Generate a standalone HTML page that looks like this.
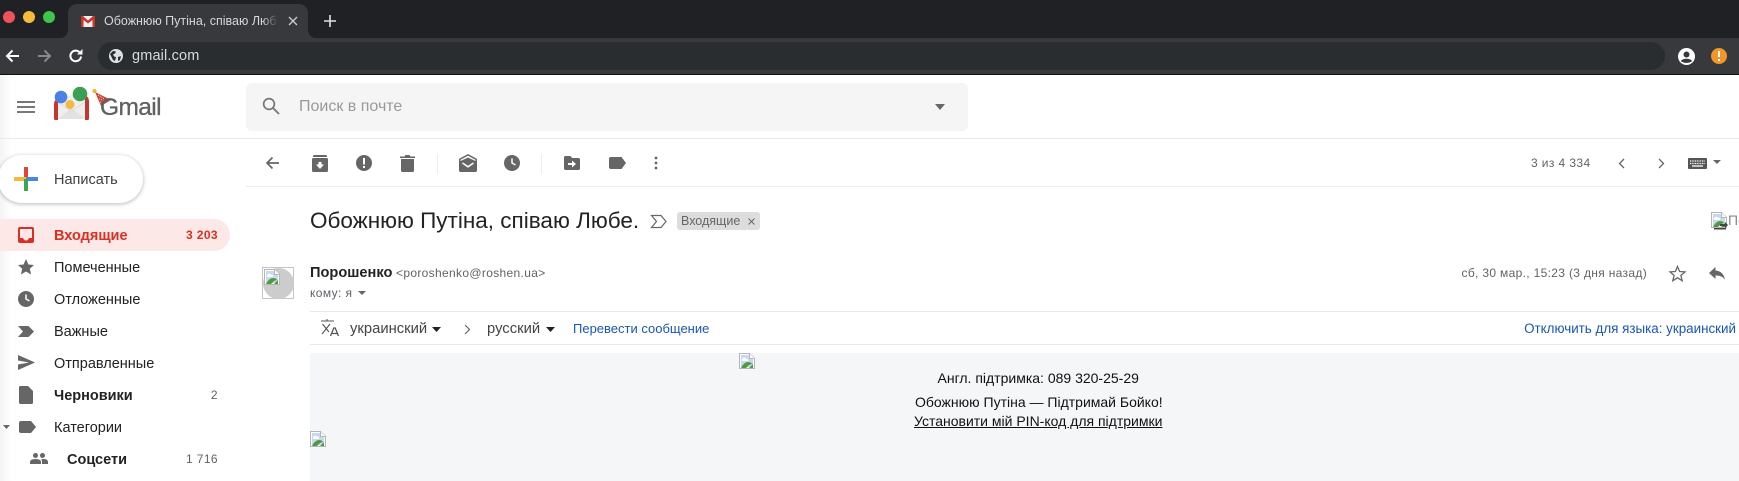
<!DOCTYPE html>
<html lang="ru"><head><meta charset="utf-8"><title>Gmail</title>
<style>
html,body{margin:0;padding:0;width:1739px;height:481px;overflow:hidden;background:#fff}
body{position:relative;font-family:"Liberation Sans","Noto Sans CJK SC",sans-serif;color:#222}
.a{position:absolute;white-space:nowrap}
svg{position:absolute;overflow:visible}
.r{position:absolute;left:54px;font-size:14.5px;line-height:20px;color:#222}
.c{position:absolute;right:1521px;font-size:12px;line-height:16px;color:#5f6368;letter-spacing:.4px}
.l{position:absolute;background:#e9e9e9;height:1px}
</style></head><body>
<!-- sidebar edge shade -->
<div class="a" style="left:0;top:75px;width:12px;height:406px;background:linear-gradient(90deg,#f4f4f4,#fff)"></div>
<!-- browser chrome -->
<div class="a" style="left:0;top:0;width:1739px;height:38px;background:#1f2124"></div>
<div class="a" style="left:0;top:38px;width:1739px;height:36px;background:#37393c"></div>
<div class="a" style="left:0;top:74px;width:1739px;height:1px;background:#111"></div>
<div class="a" style="left:98px;top:42px;width:1567px;height:28px;border-radius:14px;background:#2a2d30"></div>
<svg style="left:60px;top:28px" width="256" height="10"><path d="M0 10Q8 10 8 0V10zM256 10Q248 10 248 0V10z" fill="#37393c"/></svg>
<div class="a" style="left:68px;top:4px;width:240px;height:34px;border-radius:9px 9px 0 0;background:#37393c"></div>
<div class="a" style="left:3px;top:11px;width:12px;height:12px;border-radius:50%;background:#f0525a"></div>
<div class="a" style="left:23px;top:11px;width:12px;height:12px;border-radius:50%;background:#f6bb3a"></div>
<div class="a" style="left:43px;top:11px;width:12px;height:12px;border-radius:50%;background:#3ec54b"></div>
<svg style="left:81px;top:16px" width="14" height="11" viewBox="0 0 14 11"><rect width="14" height="11" rx="1" fill="#eee"/><path d="M0 0h2l5 4.500L12 0h2v11h-2.500V4L7 7.500 2.500 4v7H0z" fill="#c5372c"/></svg>
<div class="a" style="left:104px;top:12px;width:172px;overflow:hidden;font-size:12.500px;line-height:18px;color:#d5d7da">Обожнюю Путіна, співаю Любе.</div>
<div class="a" style="left:262px;top:6px;width:16px;height:28px;background:linear-gradient(90deg,rgba(55,57,60,0),#37393c)"></div>
<svg style="left:288px;top:16px" width="10" height="10"><path d="M1 1l8 8M9 1l-8 8" stroke="#c8cacc" stroke-width="1.400"/></svg>
<svg style="left:324px;top:15px" width="12" height="12"><path d="M6 0v12M0 6h12" stroke="#dfe1e3" stroke-width="1.600"/></svg>
<svg style="left:5px;top:49px" width="15" height="14"><path d="M14 7H2M7.500 1.500 2 7l5.500 5.500" fill="none" stroke="#fff" stroke-width="2"/></svg>
<svg style="left:37px;top:49px" width="15" height="14"><path d="M1 7h12M7.500 1.500 13 7l-5.500 5.500" fill="none" stroke="#85878a" stroke-width="2"/></svg>
<svg style="left:68px;top:48px" width="16" height="16"><path d="M13 8.500A5.300 5.300 0 1 1 11.500 4.200" fill="none" stroke="#fff" stroke-width="2"/><path d="M9 6.500h5.500V1z" fill="#fff"/></svg>
<svg style="left:109px;top:49px" width="14" height="14" viewBox="0 0 14 14"><circle cx="7" cy="7" r="7" fill="#dfe1e3"/><path d="M1 5l3-3 3 .5-1 2-2 1 1 2 2 .5-1 4-2-1zM9 8l3-1-1 4-2 1z" fill="#2a2d30"/></svg>
<div class="a" style="left:132px;top:47px;font-size:14.500px;line-height:18px;color:#d8dadd;letter-spacing:.15px">gmail.com</div>
<svg style="left:1678px;top:48px" width="17" height="17" viewBox="0 0 17 17"><circle cx="8.500" cy="8.500" r="8.500" fill="#fff"/><circle cx="8.500" cy="6.500" r="3" fill="#37393c"/><path d="M3 13c1-3 10-3 11 0-2 2.500-9 2.500-11 0z" fill="#37393c"/></svg>
<div class="a" style="left:1711px;top:48px;width:16px;height:16px;border-radius:50%;background:#f0962a"></div>
<div class="a" style="left:1718px;top:51px;width:2px;height:6px;background:#fff"></div>
<div class="a" style="left:1718px;top:59px;width:2px;height:2px;background:#fff"></div>

<!-- gmail header -->
<svg style="left:17px;top:101px" width="18" height="12"><path d="M0 1h18M0 6h18M0 11h18" stroke="#666" stroke-width="1.700"/></svg>
<svg style="left:54px;top:87px" width="60" height="36" viewBox="0 0 60 36">
<path d="M2 15Q18 2 33 13V32H2z" fill="#eee"/>
<path d="M4 32 17.500 21 31 32z" fill="#e2e2e2"/>
<path d="M4 15 17.500 24 31 15" fill="none" stroke="#dcdcdc" stroke-width="1"/>
<path d="M1 33Q0 33 0 31V17Q0 13 5 10L8 9 4 15V33zM34 33Q35 33 35 31V14Q35 10 30 7L26 6 31 13V33z" fill="#c5372c"/>
<circle cx="7" cy="10" r="6.300" fill="#4a80e8"/><circle cx="26" cy="7" r="7.300" fill="#3ba054"/><circle cx="16" cy="17.500" r="4.500" fill="#f5b93f"/>
<path d="M41 5l16 8-10 6z" fill="#c8413a"/><path d="M44 8l8 5M45 12l6 2M46 15l3 1" stroke="#f6d6d2" stroke-width="1" stroke-dasharray="1 1"/><circle cx="40.500" cy="4" r="2" fill="#f2b23a"/></svg>
<div class="a" style="left:100px;top:94px;font-size:24.500px;line-height:28px;color:#606060;letter-spacing:-.6px;-webkit-text-stroke:.3px #606060">Gmail</div>
<div class="a" style="left:246px;top:83px;width:722px;height:48px;border-radius:6px;background:#f5f5f5"></div>
<svg style="left:262px;top:97px" width="18" height="18"><circle cx="7" cy="7" r="5.400" fill="none" stroke="#777" stroke-width="1.700"/><path d="M11 11l6 6" stroke="#777" stroke-width="1.900"/></svg>
<div class="a" style="left:299px;top:97px;font-size:16px;line-height:20px;color:#999">Поиск в почте</div>
<svg style="left:935px;top:104px" width="10" height="6"><path d="M0 0h10L5 6z" fill="#666"/></svg>
<div class="l" style="left:0;top:138px;width:1739px;background:#ebebeb"></div>

<!-- sidebar -->
<div class="a" style="left:-2px;top:155px;width:145px;height:48px;border-radius:24px;background:#fff;box-shadow:0 1px 3px 1px rgba(60,64,67,.25)"></div>
<svg style="left:14px;top:167px" width="24" height="24"><rect x="10" width="4" height="12" fill="#e0443a"/><rect y="10" width="12" height="4" fill="#f4bb3a"/><rect x="12" y="10" width="12" height="4" fill="#4a85ea"/><rect x="10" y="12" width="4" height="12" fill="#3aa757"/></svg>
<div class="a" style="left:54px;top:170px;font-size:14.500px;line-height:20px;color:#3c4043">Написать</div>
<div class="a" style="left:0;top:219px;width:230px;height:32px;border-radius:0 16px 16px 0;background:#fce8e6"></div>

<svg style="left:18px;top:227px" width="16" height="16" viewBox="0 0 16 16"><path d="M2 0h12q2 0 2 2v12q0 2-2 2H2q-2 0-2-2V2q0-2 2-2zm0 2v9h3q1 2.500 3 2.500T11 11h3V2z" fill="#d93025"/></svg>
<div class="r" style="top:226px;color:#d93025;font-weight:bold">Входящие</div>
<div class="c" style="top:227px;color:#d93025;font-weight:bold">3 203</div>

<svg style="left:18px;top:259px" width="16" height="16" viewBox="0 0 16 16"><path d="M8 0l2.400 5.500 5.600.5-4.200 3.800 1.300 5.700L8 12.500l-5.100 3 1.300-5.700L0 6l5.600-.5z" fill="#666"/></svg>
<div class="r" style="top:258px">Помеченные</div>

<svg style="left:18px;top:291px" width="16" height="16"><circle cx="8" cy="8" r="8" fill="#666"/><path d="M8 3.500V8l3.500 2" fill="none" stroke="#fff" stroke-width="1.500"/></svg>
<div class="r" style="top:290px">Отложенные</div>

<svg style="left:18px;top:326px" width="16" height="11"><path d="M0 0h10.500L16 5.500 10.500 11H0l5-5.500z" fill="#666"/></svg>
<div class="r" style="top:322px">Важные</div>

<svg style="left:18px;top:355px" width="17" height="15"><path d="M0 0l17 7.500L0 15V9.500l11-2-11-2z" fill="#666"/></svg>
<div class="r" style="top:354px">Отправленные</div>

<svg style="left:19px;top:386px" width="14" height="18"><path d="M1.500 0H9l5 5v11.500q0 1.500-1.500 1.500h-11Q0 18 0 16.500v-15Q0 0 1.500 0z" fill="#666"/></svg>
<div class="r" style="top:386px;font-weight:bold">Черновики</div>
<div class="c" style="top:387px">2</div>

<svg style="left:3px;top:425px" width="7" height="4"><path d="M0 0h7L3.500 4z" fill="#666"/></svg>
<svg style="left:19px;top:421px" width="17" height="12"><path d="M2 0h10l5 6-5 6H2q-2 0-2-2V2q0-2 2-2z" fill="#666"/></svg>
<div class="r" style="top:418px">Категории</div>

<svg style="left:30px;top:453px" width="18" height="11" viewBox="0 0 18 11"><circle cx="5.500" cy="2.500" r="2.500" fill="#666"/><circle cx="12.500" cy="2.500" r="2.500" fill="#666"/><path d="M0 11V9q0-3 5.500-3T11 9v2zM12 11V8.500q0-1.200-1-2.300 7-.8 7 2.800v2z" fill="#666"/></svg>
<div class="r" style="left:67px;top:450px;font-weight:bold">Соцсети</div>
<div class="c" style="top:451px">1 716</div>

<!-- toolbar -->
<svg style="left:265px;top:156px" width="14" height="14"><path d="M14 7H2M7.500 1.500 2 7l5.500 5.500" fill="none" stroke="#666" stroke-width="1.700"/></svg>
<svg style="left:312px;top:155px" width="16" height="17" viewBox="0 0 16 17"><path d="M2.500 0h11Q15 0 15 1.500V2H1v-.5Q1 0 2.500 0z" fill="#666"/><path d="M1.500 3h13Q16 3 16 4.500V15.500Q16 17 14.500 17h-13Q0 17 0 15.500V4.500Q0 3 1.500 3z" fill="#666"/><path d="M8 14 4 9.500h2.500V7h3v2.500H12z" fill="#fff"/></svg>
<svg style="left:356px;top:155px" width="16" height="16"><circle cx="8" cy="8" r="8" fill="#666"/><rect x="7" y="3" width="2" height="6.500" fill="#fff"/><rect x="7" y="11" width="2" height="2" fill="#fff"/></svg>
<svg style="left:400px;top:155px" width="15" height="17"><path d="M0 1.500h4.500l1-1.500h4l1 1.500H15V3H0zM1 4h13v11.500q0 1.500-1.500 1.500h-10Q1 17 1 15.500z" fill="#666"/></svg>
<div class="a" style="left:437px;top:154px;width:1px;height:20px;background:#eee"></div>
<svg style="left:459px;top:154px" width="18" height="18" viewBox="0 0 18 18"><path d="M.8 7V5.300L9 .9l8.200 4.400V7" fill="none" stroke="#666" stroke-width="1.500"/><path d="M0 7h1.500L9 3.500 16.500 7H18v9.500q0 1.500-1.500 1.500h-15Q0 18 0 16.500z" fill="#666"/><path d="M3.500 9 9 12.800 14.500 9" fill="none" stroke="#fff" stroke-width="1.500"/></svg>
<svg style="left:503.500px;top:155px" width="16" height="16"><circle cx="8" cy="8" r="8" fill="#666"/><path d="M8 3.500V8l3.500 2" fill="none" stroke="#fff" stroke-width="1.500"/></svg>
<div class="a" style="left:541px;top:154px;width:1px;height:20px;background:#eee"></div>
<svg style="left:564px;top:156px" width="16" height="14"><path d="M1.500 0h5l1.500 2h6.500Q16 2 16 3.500v9q0 1.500-1.500 1.500h-13Q0 14 0 12.500v-11Q0 0 1.500 0z" fill="#666"/><path d="M4 7h4V4.500L12 8l-4 3.500V9H4z" fill="#fff"/></svg>
<svg style="left:608.500px;top:157px" width="17" height="12"><path d="M2 0h10.500L17 6l-4.500 6H2q-2 0-2-2V2q0-2 2-2z" fill="#666"/></svg>
<svg style="left:654px;top:156px" width="4" height="14"><circle cx="2" cy="2" r="1.400" fill="#666"/><circle cx="2" cy="7" r="1.400" fill="#666"/><circle cx="2" cy="12" r="1.400" fill="#666"/></svg>
<div class="a" style="left:1531px;top:155px;font-size:12px;line-height:16px;color:#5f6368;letter-spacing:.4px">3 из 4 334</div>
<svg style="left:1618px;top:158px" width="7" height="11"><path d="M6 1 1.500 5.500 6 10" fill="none" stroke="#666" stroke-width="1.300"/></svg>
<svg style="left:1658px;top:158px" width="7" height="11"><path d="M1 1l4.500 4.500L1 10" fill="none" stroke="#666" stroke-width="1.300"/></svg>
<svg style="left:1688px;top:158px" width="19" height="11"><rect width="19" height="11" rx="1" fill="#555"/><path d="M2 3h15M2 5.500h15" stroke="#fff" stroke-width="1.300" stroke-dasharray="1 .7"/><path d="M4 8h11" stroke="#fff" stroke-width="1.300"/></svg>
<svg style="left:1713px;top:160px" width="8" height="4"><path d="M0 0h8L4 4z" fill="#666"/></svg>
<div class="l" style="left:246px;top:186px;width:1493px;background:#eee"></div>

<!-- subject -->
<div class="a" style="left:310px;top:207px;font-size:22.500px;line-height:28px;color:#222">Обожнюю Путіна, співаю Любе.</div>
<svg style="left:651px;top:215px" width="16" height="13"><path d="M.5.500h9.500L15 6.500 10 12.500H.5L5.500 6.500z" fill="none" stroke="#666" stroke-width="1.200"/></svg>
<div class="a" style="left:677px;top:212px;width:83px;height:18px;border-radius:3px;background:#ddd"></div>
<div class="a" style="left:681px;top:213px;font-size:12.500px;line-height:16px;color:#666">Входящие</div>
<svg style="left:748px;top:218px" width="7" height="7"><path d="M.5.500l6 6M6.500.500l-6 6" stroke="#666" stroke-width="1"/></svg>

<!-- broken image, top right -->
<svg style="left:1711px;top:212px" width="17" height="17"><use href="#bi"/><path d="M3 16h12v1.500H3zM9 12h5v-2l3 3-3 3v-2H9z" fill="#444"/></svg>
<div class="a" style="left:1728px;top:211px;font-size:14px;line-height:18px;color:#888">Пе</div>

<!-- sender -->
<div class="a" style="left:262px;top:267px;width:30px;height:30px;border:1px solid #c4c4c4;background:#fff"></div>
<div class="a" style="left:263px;top:268px;width:31px;height:31px;border-radius:50%;background:#ccc"></div>
<svg style="left:264px;top:269px" width="16" height="16"><use href="#bi"/></svg>
<div class="a" style="left:310px;top:264px;font-size:14.600px;line-height:18px;font-weight:bold;color:#222">Порошенко</div>
<div class="a" style="left:396px;top:265px;font-size:12px;line-height:16px;color:#5f6368;letter-spacing:.33px">&lt;poroshenko@roshen.ua&gt;</div>
<div class="a" style="left:310px;top:285px;font-size:12px;line-height:16px;color:#5f6368;letter-spacing:.4px">кому: я</div>
<svg style="left:358px;top:291px" width="8" height="4"><path d="M0 0h8L4 4z" fill="#666"/></svg>
<div class="a" style="left:1461.500px;top:265px;font-size:12px;line-height:16px;color:#5f6368;letter-spacing:.33px">сб, 30 мар., 15:23 (3 дня назад)</div>
<svg style="left:1669px;top:265px" width="17" height="17" viewBox="0 0 17 17"><path d="M8.500 1.500l2.100 5 5.400.400-4.100 3.500 1.300 5.300-4.700-2.900-4.700 2.900 1.300-5.300L1 6.900l5.400-.4z" fill="none" stroke="#666" stroke-width="1.300"/></svg>
<svg style="left:1709px;top:267px" width="16" height="13"><path d="M6.500 0v3.500C12 4 15 7 16 13c-2-3.500-5-4.500-9.500-4.500V12L0 6z" fill="#666"/></svg>

<!-- translate bar -->
<div class="l" style="left:310px;top:311px;width:1429px"></div>
<div class="l" style="left:310px;top:344px;width:1429px"></div>
<svg style="left:321px;top:319px" width="18" height="17" viewBox="0 0 18 17"><path d="M0 2h13M6 0v2M1.500 5 8 13M9 5 1 15" fill="none" stroke="#555" stroke-width="1.100"/><path d="M9.500 17l3.300-8h1.400l3.300 8M10.800 14.500h5.400" fill="none" stroke="#555" stroke-width="1.300"/></svg>
<div class="a" style="left:350px;top:320px;font-size:14.800px;line-height:18px;color:#444">украинский</div>
<svg style="left:432px;top:327px" width="9" height="5"><path d="M0 0h9L4.500 5z" fill="#222"/></svg>
<svg style="left:464px;top:324px" width="7" height="11"><path d="M1 1l4.500 4.500L1 10" fill="none" stroke="#666" stroke-width="1.200"/></svg>
<div class="a" style="left:487px;top:320px;font-size:14.800px;line-height:18px;color:#444">русский</div>
<svg style="left:546px;top:327px" width="9" height="5"><path d="M0 0h9L4.500 5z" fill="#222"/></svg>
<div class="a" style="left:573px;top:320px;font-size:13px;line-height:17px;color:#1a56b0">Перевести сообщение</div>
<div class="a" style="right:3px;top:320px;font-size:13.400px;line-height:17px;color:#1a56b0">Отключить для языка: украинский</div>

<!-- message body -->
<div class="a" style="left:310px;top:353px;width:1429px;height:128px;background:#f4f6f8"></div>
<svg style="left:739px;top:353px" width="16" height="16"><use href="#bi"/></svg>
<svg style="left:310px;top:431px" width="16" height="16"><use href="#bi"/></svg>
<div class="a" style="left:937.500px;top:369px;font-size:14px;line-height:18px;color:#111">Англ. підтримка: 089 320-25-29</div>
<div class="a" style="left:915px;top:393px;font-size:14px;line-height:18px;color:#111">Обожнюю Путіна — Підтримай Бойко!</div>
<div class="a" style="left:914px;top:412px;font-size:14px;line-height:18px;color:#111;text-decoration:underline">Установити мій PIN-код для підтримки</div>

<svg width="0" height="0" style="left:0;top:0"><defs><g id="bi"><path d="M.5.5h10L15.500 5.500v10H.5z" fill="#fff" stroke="#b5b5b5"/><path d="M2 2h8v4h4v8H2z" fill="#c9d8f2"/><path d="M3 6q1.500-2 3-1t3 1v2H3z" fill="#fff"/><path d="M2 15q3-6 7-6 3 0 4 2l-3 1-3 3z" fill="#4f9a3f"/><path d="M10.500.5v5h5" fill="#fff" stroke="#b5b5b5"/><path d="M10 15l4-4v4z" fill="#4f9a3f"/></g></defs></svg>
</body></html>
